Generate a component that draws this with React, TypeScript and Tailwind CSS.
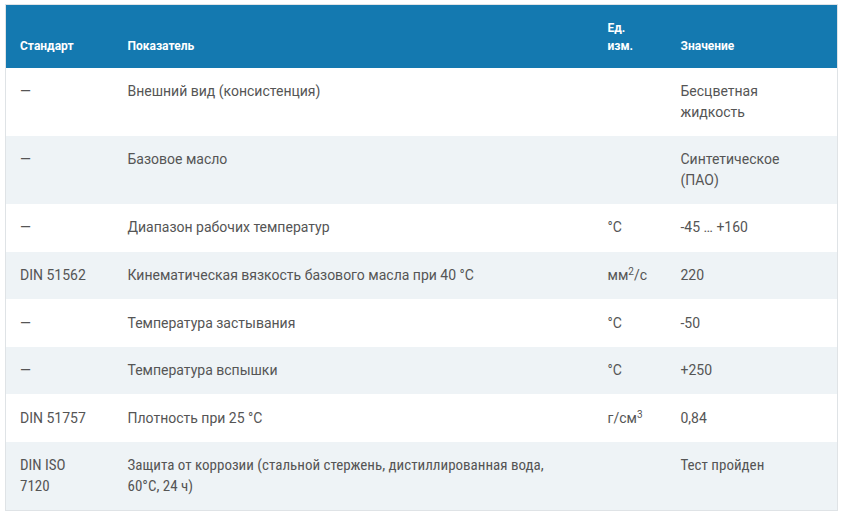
const rows: { std: React.ReactNode; name: React.ReactNode; unit: React.ReactNode; value: React.ReactNode; condensed?: boolean }[] = [
  { std: '—', name: 'Внешний вид (консистенция)', unit: '', value: <>Бесцветная<br />жидкость</> },
  { std: '—', name: 'Базовое масло', unit: '', value: <>Синтетическое<br />(ПАО)</> },
  { std: '—', name: 'Диапазон рабочих температур', unit: '°C', value: '-45 … +160' },
  {
    std: 'DIN 51562',
    name: 'Кинематическая вязкость базового масла при 40 °C',
    unit: <>мм<sup className="text-[10px]">2</sup>/с</>,
    value: '220',
  },
  { std: '—', name: 'Температура застывания', unit: '°C', value: '-50' },
  { std: '—', name: 'Температура вспышки', unit: '°C', value: '+250' },
  { std: 'DIN 51757', name: 'Плотность при 25 °C', unit: <>г/см<sup className="text-[10px]">3</sup></>, value: '0,84' },
  {
    std: <>DIN ISO<br />7120</>,
    name: <>Защита от коррозии (стальной стержень, дистиллированная вода,<br />60°C, 24 ч)</>,
    unit: '',
    value: 'Тест пройден',
    condensed: true,
  },
]

export default function App() {
  return (
    <div className="min-h-[518px] bg-white pl-[5px] pt-[4px] font-['Roboto',sans-serif]">
      <table className="w-[832px] table-fixed border-collapse border border-[#dfe3e6]">
        <colgroup>
          <col className="w-[108px]" />
          <col className="w-[480px]" />
          <col className="w-[73px]" />
          <col className="w-[171px]" />
        </colgroup>
        <thead>
          <tr className="h-[63px] bg-[#1479b0] text-left align-bottom text-[12px] font-bold leading-[18px] text-white">
            <th className="px-[14px] pb-[13px]">Стандарт</th>
            <th className="px-[14px] pb-[13px]">Показатель</th>
            <th className="px-[14px] pb-[13px]">
              Ед.
              <br />
              изм.
            </th>
            <th className="px-[14px] pb-[13px]">Значение</th>
          </tr>
        </thead>
        <tbody className="text-[14px] leading-[20.75px] text-[#555]">
          {rows.map((r, i) => (
            <tr
              key={i}
              className={`align-top ${i % 2 === 1 ? 'bg-[#eef3f6]' : 'bg-white'} ${
                r.condensed ? "font-['Roboto_Condensed','Liberation_Sans_Narrow',Roboto,sans-serif] text-[15px] [font-stretch:condensed]" : ''
              }`}
            >
              <td className="px-[14px] py-[13.4px]">{r.std}</td>
              <td className="px-[14px] py-[13.4px]">{r.name}</td>
              <td className="whitespace-nowrap px-[14px] py-[13.4px]">{r.unit}</td>
              <td className="px-[14px] py-[13.4px]">{r.value}</td>
            </tr>
          ))}
        </tbody>
      </table>
    </div>
  )
}
